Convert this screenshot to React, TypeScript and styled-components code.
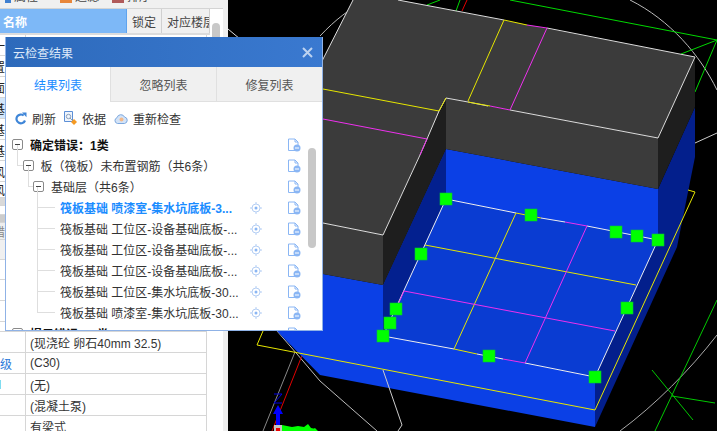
import React, { FunctionComponent } from "react";
import styled, { createGlobalStyle } from "styled-components";

const GlobalStyle = createGlobalStyle`
  html, body {
    margin: 0;
    padding: 0;
    background: #fff;
    overflow: hidden;
  }
  body {
    font-family: "Liberation Sans", "Noto Sans CJK SC", sans-serif;
    font-size: 12px;
    color: #333;
  }
`;

const Page = styled.div`
  position: relative;
  width: 717px;
  height: 431px;
  display: flex;
  overflow: hidden;
`;

/* ---------- left property panel ---------- */

const LeftPanel = styled.aside`
  width: 228px;
  flex: none;
  display: flex;
  flex-direction: column;
  background: #fff;
  border-right: 5px solid #efefef;
  box-sizing: border-box;
  overflow: hidden;
`;

// the toolbar is scrolled almost out of the picture, only its lower edge shows
const TopStrip = styled.div`
  height: 9px;
  flex: none;
  display: grid;
  grid-template-columns: 55px 52px 1fr;
  align-items: start;
  padding-left: 5px;
  box-sizing: border-box;
  background: #f0f0f0;
  border-bottom: 1px solid #d4d4d4;
  overflow: hidden;
`;

const StripItem = styled.span`
  display: flex;
  align-items: flex-end;
  gap: 3px;
  margin-top: -9px;
  line-height: 12px;
  height: 12px;
  white-space: nowrap;
  color: #444;
`;

const StripIcon = styled.i<{ $color: string; $w?: number }>`
  display: block;
  width: ${(p) => p.$w ?? 12}px;
  height: 12px;
  background: ${(p) => p.$color};
`;

const HeaderRow = styled.div`
  height: 24px;
  flex: none;
  display: grid;
  grid-template-columns: 127px 35px 48px;
  width: 210px;
  overflow: hidden;
  border-bottom: 2px solid #dcdcdc;
`;

const HeaderCell = styled.div<{ $active?: boolean }>`
  display: flex;
  align-items: center;
  padding-left: ${(p) => (p.$active ? 3 : 5)}px;
  white-space: nowrap;
  overflow: hidden;
  background: ${(p) => (p.$active ? "#7db8f7" : "#f0f0f0")};
  color: ${(p) => (p.$active ? "#fff" : "#444")};
  font-weight: ${(p) => (p.$active ? 700 : 400)};
  border-right: 1px solid ${(p) => (p.$active ? "#5ea3ee" : "#d0d0d0")};
`;

const TableArea = styled.div`
  position: relative;
  flex: 1;
  min-height: 0;
`;

const Scrollbar = styled.div`
  position: absolute;
  left: 212px;
  top: -12px;
  width: 8px;
  height: 40px;
  border-radius: 4px;
  background: #c8c8c8;
`;

const Row = styled.div<{ $h: number; $bg?: string }>`
  height: ${(p) => p.$h}px;
  width: 207px;
  display: grid;
  grid-template-columns: 26px 1fr;
  box-sizing: border-box;
  border-bottom: 1px solid #d6d6d6;
  border-right: 1px solid #d6d6d6;
  background: ${(p) => p.$bg ?? "#fff"};
  overflow: hidden;
`;

const KeyCell = styled.div<{ $tail?: boolean; $color?: string }>`
  display: flex;
  align-items: center;
  justify-content: ${(p) => (p.$tail ? "flex-end" : "flex-start")};
  overflow: hidden;
  white-space: nowrap;
  padding-right: ${(p) => (p.$tail ? 13 : 0)}px;
  text-indent: ${(p) => (p.$tail ? 0 : -7)}px;
  border-right: 1px solid #d6d6d6;
  color: ${(p) => p.$color ?? "#222"};
`;

const CyanMark = styled.i`
  display: block;
  width: 2px;
  height: 9px;
  margin-right: 24px;
  background: #7fdcf0;
`;

const ValueCell = styled.div`
  display: flex;
  align-items: center;
  padding-left: 4px;
  white-space: nowrap;
  overflow: hidden;
  font-size: 12px;
  color: #333;
`;

/* ---------- floating check dialog ---------- */

const Dialog = styled.section`
  position: absolute;
  left: 5px;
  top: 37px;
  width: 318px;
  height: 294px;
  display: flex;
  flex-direction: column;
  box-sizing: border-box;
  background: #fff;
  border: 1px solid #8fb2e6;
  border-top: none;
  overflow: hidden;
`;

const TitleBar = styled.header`
  height: 30px;
  flex: none;
  display: flex;
  align-items: center;
  justify-content: space-between;
  margin: 0 -1px;
  padding: 0 10px 0 8px;
  background: linear-gradient(90deg, #2d6abb, #3a79d0);
  color: #dce8f8;
`;

const Tabs = styled.nav`
  height: 35px;
  flex: none;
  display: grid;
  grid-template-columns: 104px 106px 1fr;
`;

const Tab = styled.div<{ $active?: boolean }>`
  display: flex;
  align-items: center;
  justify-content: center;
  color: ${(p) => (p.$active ? "#1a8cff" : "#555")};
  background: ${(p) => (p.$active ? "#fff" : "#f0f0f0")};
  border-left: ${(p) => (p.$active ? "none" : "1px solid #e0e0e0")};
  border-bottom: ${(p) => (p.$active ? "none" : "1px solid #e0e0e0")};
`;

const Toolbar = styled.div`
  height: 32px;
  flex: none;
  display: flex;
  align-items: center;
  gap: 8px;
  padding-left: 9px;
`;

const ToolButton = styled.span`
  display: flex;
  align-items: center;
  gap: 5px;
  color: #333;
`;

const TreeArea = styled.div`
  position: relative;
  flex: 1;
  min-height: 0;
  overflow: hidden;
`;

const TreeScroll = styled.div`
  position: absolute;
  left: 302px;
  top: 14px;
  width: 8px;
  height: 100px;
  border-radius: 4px;
  background: #c8c8c8;
`;

const TreeRow = styled.div<{ $level: number }>`
  position: relative;
  height: 21px;
  display: flex;
  align-items: center;
  padding-left: ${(p) => (p.$level === 3 ? 54 : 6 + p.$level * 10.5)}px;
  padding-right: 21px;

  ${(p) =>
    p.$level > 0 &&
    `&::before {
      content: "";
      position: absolute;
      left: ${p.$level === 3 ? 31 : 11 + (p.$level - 1) * 10.5}px;
      top: -10px;
      width: ${p.$level === 3 ? 17 : 6}px;
      height: 20px;
      border-left: 1px solid #dedede;
      border-bottom: 1px solid #dedede;
    }`}
`;

const Toggle = styled.span`
  position: relative;
  width: 11px;
  height: 11px;
  flex: none;
  margin-right: 7px;
  box-sizing: border-box;
  border: 1px solid #8a8a8a;
  border-radius: 2px;
  background: #fff;

  &::after {
    content: "";
    position: absolute;
    left: 2px;
    right: 2px;
    top: 4px;
    height: 1px;
    background: #444;
  }
`;

const RowLabel = styled.span<{ $bold?: boolean; $current?: boolean }>`
  flex: 1;
  min-width: 0;
  white-space: nowrap;
  overflow: hidden;
  font-weight: ${(p) => (p.$bold || p.$current ? 700 : 400)};
  color: ${(p) => (p.$current ? "#1a8cff" : p.$bold ? "#111" : "#333")};
`;

const Locate = styled.span`
  width: 12px;
  height: 12px;
  flex: none;
  margin-right: 25px;
  display: flex;
`;

/* ---------- icons ---------- */

const DocIcon: FunctionComponent = () => (
  <svg width="14" height="14" viewBox="0 0 14 14" style={{ flex: "none" }}>
    <path d="M1.5 1h6.5l3 3v8.500h-9.500z" fill="#fff" stroke="#8ab6f4" />
    <path d="M8 1v3h3" fill="none" stroke="#8ab6f4" />
    <circle cx="10" cy="10" r="3.500" fill="#8ab6f4" />
    <rect x="8" y="9.500" width="4" height="1" fill="#fff" />
  </svg>
);

const LocateIcon: FunctionComponent = () => (
  <svg width="12" height="12" viewBox="0 0 12 12">
    <circle cx="6" cy="6" r="4" fill="none" stroke="#b4cef4" />
    <circle cx="6" cy="6" r="1.500" fill="#8ab6f4" />
    <path d="M6 0v2M6 10v2M0 6h2M10 6h2" stroke="#b4cef4" />
  </svg>
);

const RefreshIcon: FunctionComponent = () => (
  <svg width="12" height="13" viewBox="0 0 12 13">
    <path d="M10 8.500A4.400 4.400 0 1 1 8.700 3.500" fill="none" stroke="#3f86d8" strokeWidth="2.200" />
    <path d="M7 .5h4.500v4.700z" fill="#3f86d8" />
  </svg>
);

const BasisIcon: FunctionComponent = () => (
  <svg width="13" height="14" viewBox="0 0 13 14">
    <path d="M.5.5h8v10h-8z" fill="#eef4fc" stroke="#5c8fd6" />
    <circle cx="4.500" cy="5.500" r="2.200" fill="none" stroke="#8a9fb8" />
    <path d="M6 7l2 2" stroke="#8a9fb8" />
    <path d="M10 8l3 3-3 3-3-3z" fill="#f59a23" />
  </svg>
);

const CloudIcon: FunctionComponent = () => (
  <svg width="14" height="11" viewBox="0 0 14 11">
    <path
      d="M3.500 10.500a3 3 0 0 1-.5-5.800 4 4 0 0 1 7.500-.7 3.300 3.300 0 0 1 0 6.500z"
      fill="#d3e3f7"
      stroke="#7ba7de"
    />
    <circle cx="7.500" cy="6.500" r="2" fill="#f3b98a" />
  </svg>
);

/* ---------- 3D view, drawn in page coordinates ---------- */

const Viewport = styled.svg`
  flex: 1;
  display: block;
  height: 431px;
  background: #000;
`;

const markers: [number, number][] = [
  [446, 199],
  [531, 215],
  [616, 232],
  [637, 236],
  [658, 240],
  [421, 254],
  [627, 308],
  [396, 309],
  [390, 323],
  [383, 336],
  [489, 356],
  [595, 377],
];

const Scene: FunctionComponent = () => (
  <Viewport viewBox="228 0 489 431" width="489" height="431">
    {/* construction lines behind the model */}
    <g fill="none" strokeWidth="1">
      <path d="M228 29L240 39" stroke="#ddd" />
      <path d="M320 36C335 20 350 8 368 0" stroke="#bbb" />
      <path d="M630 0C670 20 700 55 717 90" stroke="#bbb" />
      <path d="M695 143L717 133" stroke="#ccc" />
      <path d="M717 335C690 370 655 405 620 431" stroke="#aaa" />
      <path d="M277 331L297 354L320 381L377 431" stroke="#bbb" />
      <path d="M295 352L263 431" stroke="#888" />
      <path d="M303 353L272 431" stroke="#e00000" />
      <path d="M510 0L717 40L681 54M717 40L695 92" stroke="#00d800" />
      <path d="M427 5L440 0M456 11L460 0" stroke="#00d800" />
      <path d="M462 11L467 0" stroke="#e00000" />
      <path d="M652 370L693 420M717 300L655 431M672 396L715 403" stroke="#00c800" />
    </g>

    {/* blue base */}
    <polygon
      points="446,149 658,189 658,238 595,377 595,427 320,375 277,331 240,290 323,274 383,285"
      fill="#0b40e6"
    />
    <polygon points="658,189 695,107 695,157 677,247 595,427 595,377 658,238" fill="#031f8c" />
    <polygon points="446,149 383,285 383,336 446,199" fill="#03208f" />
    <polygon points="446,199 658,240 595,377 383,336" fill="#0a3cd2" />
    <path d="M383 370L402 425L398 431" fill="none" stroke="#ccc" />

    {/* dark upper block */}
    <polygon points="353,0 398,0 695,57 658,138 446,98 383,235 323,223 228,223 228,60 320,65" fill="#3b3b3b" />
    <polygon points="323,223 383,235 383,285 323,274" fill="#3b3b3b" />
    <polygon points="446,98 658,138 658,189 446,149" fill="#3b3b3b" />
    <polygon points="446,98 446,149 383,285 383,235" fill="#1e1e1e" />
    <polygon points="658,138 695,57 695,107 658,189" fill="#1e1e1e" />

    {/* block outlines and axis lines */}
    <g fill="none" strokeWidth="1">
      <path d="M353 0L320 65M398 0L504 20M547 28L695 57L658 138L510 110M488 106L468 102L446 98L439 111M427 139L420 155M420 155L383 235L323 223" stroke="#ddd" />
      <path d="M504 20L527 25M504 20L468 101M323 89L439 111L446 98" stroke="#e6e600" />
      <path d="M468 102L490 106" stroke="#e6e600" />
      <path d="M527 25L547 28L510 110L490 106M323 119L427 139L420 155" stroke="#ee30ee" />
      <path d="M439 111L427 139" stroke="#ddd" />
    </g>

    {/* floor grid */}
    <g fill="none" strokeWidth="1">
      <path d="M446 199L516 213M541 218L565 222M587 226L658 240L595 377L525 363M503 359L477 354M454 349L383 336L446 199" stroke="#eee" />
      <path d="M516 213L541 218M516 213L454 349L477 354M425 245L636 285" stroke="#e6e600" />
      <path d="M565 222L587 226L525 363L503 359M404 291L615 331M404 291L397 307" stroke="#ee30ee" />
      <path d="M263 331L257 345L595 410L695 192L688 190" stroke="#e6e600" />
    </g>

    {markers.map(([x, y]) => (
      <rect key={`${x}-${y}`} x={x - 6} y={y - 6} width="12" height="12" fill="#00ff00" stroke="#06c03c" strokeWidth="0.6" />
    ))}

    {/* axis gizmo */}
    <path d="M274 394h8l-8 9h8" fill="none" stroke="#0000e0" />
    <path d="M278 405l-5 9h3v11h4v-11h3z" fill="#0000ff" />
    <rect x="274" y="425" width="8" height="6" fill="#c4c4c4" />
    <rect x="276" y="428" width="4" height="3" fill="#ee0000" />
    <path d="M282 431v-6l10 2 6-1 6 1 4-3 3 4 5 1v2zM310 431l5-3 3 3z" fill="#00ff00" />
  </Viewport>
);

/* ---------- data ---------- */

interface TableRow {
  h: number;
  key?: string;
  value?: string;
  bg?: string;
  tail?: boolean;
  keyColor?: string;
  cyan?: boolean;
}

const tableRows: TableRow[] = [
  { h: 21, key: "一" },
  { h: 21, key: "置" },
  { h: 21, key: "面" },
  { h: 21, key: "基", bg: "#d3e6fa" },
  { h: 21, key: "基" },
  { h: 21, key: "基" },
  { h: 21, key: "风" },
  { h: 16, key: "风" },
  { h: 8, bg: "#d9d9d9" },
  { h: 9 },
  { h: 8, bg: "#cccccc" },
  { h: 17, key: "错", bg: "#eeeeee", keyColor: "#888" },
  { h: 20, bg: "#f0f0f0" },
  { h: 20 },
  { h: 21 },
  { h: 21 },
  { h: 10 },
  { h: 21, value: "(现浇砼 卵石40mm 32.5)" },
  { h: 21, key: "等级", tail: true, keyColor: "#2a78d8", value: "(C30)" },
  { h: 21, cyan: true, value: "(无)" },
  { h: 21, value: "(混凝土泵)" },
  { h: 21, value: "有梁式" },
];

interface TreeItem {
  level: number;
  label: string;
  bold?: boolean;
  current?: boolean;
}

const treeItems: TreeItem[] = [
  { level: 0, label: "确定错误：1类", bold: true },
  { level: 1, label: "板（筏板）未布置钢筋（共6条）" },
  { level: 2, label: "基础层（共6条）" },
  { level: 3, label: "筏板基础 喷漆室-集水坑底板-3...", current: true },
  { level: 3, label: "筏板基础 工位区-设备基础底板-..." },
  { level: 3, label: "筏板基础 工位区-设备基础底板-..." },
  { level: 3, label: "筏板基础 工位区-设备基础底板-..." },
  { level: 3, label: "筏板基础 工位区-集水坑底板-30..." },
  { level: 3, label: "筏板基础 喷漆室-集水坑底板-30..." },
  { level: 0, label: "提示错误：1类", bold: true },
];

const App: FunctionComponent = () => {
  return (
    <Page>
      <GlobalStyle />
      <LeftPanel>
        <TopStrip>
          <StripItem>
            <StripIcon $color="#3f7fd0" $w={6} />
            属性
          </StripItem>
          <StripItem>
            <StripIcon $color="#e8863a" />
            过滤
          </StripItem>
          <StripItem>
            <StripIcon $color="#b05a5a" />
            排序
          </StripItem>
        </TopStrip>
        <HeaderRow>
          <HeaderCell $active>名称</HeaderCell>
          <HeaderCell>锁定</HeaderCell>
          <HeaderCell>对应楼层</HeaderCell>
        </HeaderRow>
        <TableArea>
          <Scrollbar />
          {tableRows.map((row, i) => (
            <Row key={i} $h={row.h} $bg={row.bg}>
              <KeyCell $tail={row.tail} $color={row.keyColor}>
                {row.cyan ? <CyanMark /> : row.key}
              </KeyCell>
              <ValueCell>{row.value}</ValueCell>
            </Row>
          ))}
        </TableArea>
      </LeftPanel>

      <Scene />

      <Dialog>
        <TitleBar>
          云检查结果
          <svg width="11" height="11" viewBox="0 0 11 11">
            <path d="M1 1l9 9M10 1l-9 9" stroke="#bcd2f0" strokeWidth="2" />
          </svg>
        </TitleBar>
        <Tabs>
          <Tab $active>结果列表</Tab>
          <Tab>忽略列表</Tab>
          <Tab>修复列表</Tab>
        </Tabs>
        <Toolbar>
          <ToolButton>
            <RefreshIcon />
            刷新
          </ToolButton>
          <ToolButton>
            <BasisIcon />
            依据
          </ToolButton>
          <ToolButton>
            <CloudIcon />
            重新检查
          </ToolButton>
        </Toolbar>
        <TreeArea>
          <TreeScroll />
          {treeItems.map((item, i) => (
            <TreeRow key={i} $level={item.level}>
              {item.level < 3 && <Toggle />}
              <RowLabel $bold={item.bold} $current={item.current}>
                {item.label}
              </RowLabel>
              {item.level === 3 && (
                <Locate>
                  <LocateIcon />
                </Locate>
              )}
              <DocIcon />
            </TreeRow>
          ))}
        </TreeArea>
      </Dialog>
    </Page>
  );
};

export default App;
